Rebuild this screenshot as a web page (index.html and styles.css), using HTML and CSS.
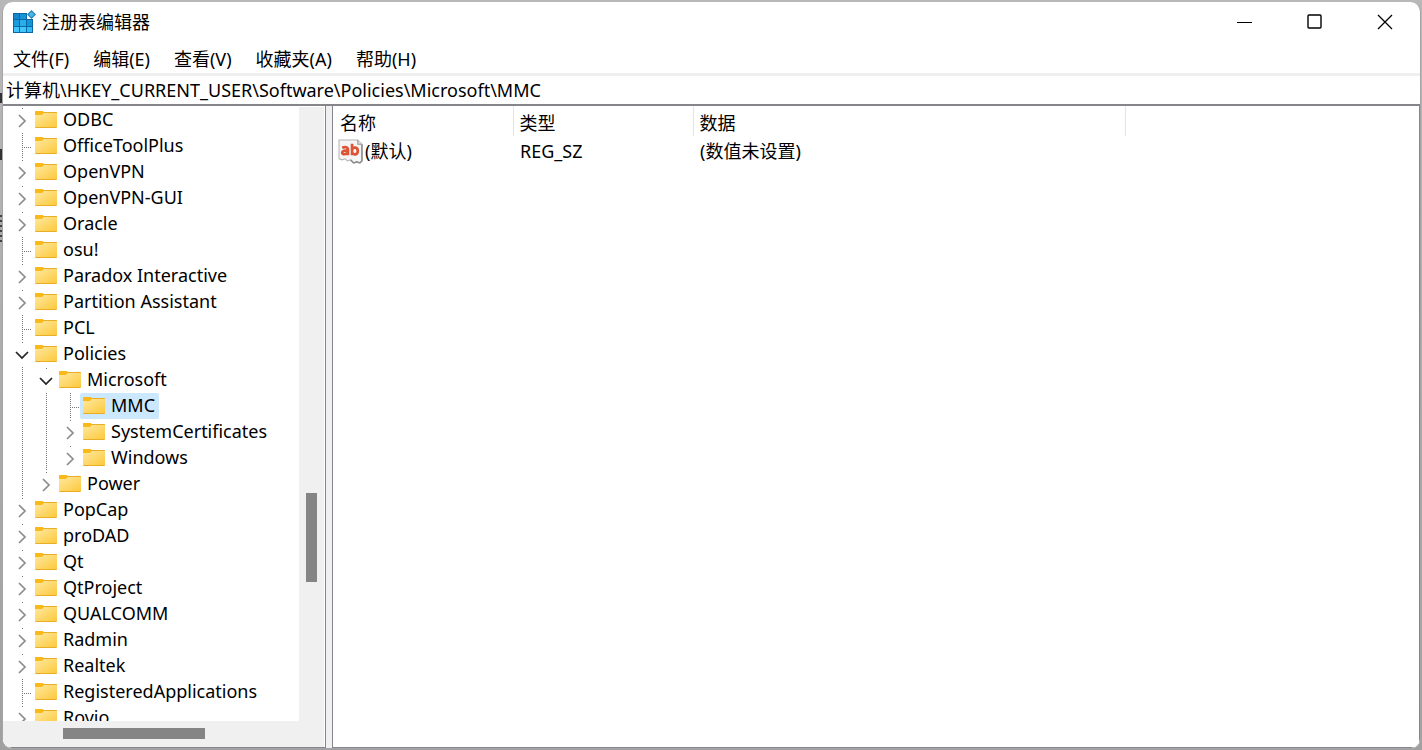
FILE: index.html
```
<!DOCTYPE html>
<html lang="zh-CN">
<head>
<meta charset="utf-8">
<title>注册表编辑器</title>
<link rel="stylesheet" href="styles.css">
</head>
<body>
<svg class="defs" aria-hidden="true">
  <defs>
    <linearGradient id="fg" x1="0" y1="0" x2="1" y2="1"><stop offset="0" stop-color="#ffe8a0"/><stop offset="1" stop-color="#fcc93c"/></linearGradient>
    <symbol id="folder" viewBox="0 0 22 18">
      <path d="M0 2a1 1 0 0 1 1-1h6l2 1h12.500a.5.5 0 0 1 .5.5V17a1 1 0 0 1-1 1H1a1 1 0 0 1-1-1z" fill="#e9ae25"/>
      <path d="M0 4h7l1.500-1H22v14H0z" fill="url(#fg)"/>
      <path d="M0 2a1 1 0 0 1 1-1h6l1.500 1.500L7 5H0z" fill="#fbb917"/>
    </symbol>
    <symbol id="right" viewBox="0 0 14 14"><path d="M4 1l6 6-6 6" fill="none" stroke="#8c8c8c" stroke-width="1.700"/></symbol>
    <symbol id="down" viewBox="0 0 14 14"><path d="M1 4l6 6 6-6" fill="none" stroke="#222" stroke-width="1.700"/></symbol>
  </defs>
</svg>
<main class="window">
  <header class="title">
    <svg class="app" viewBox="0 0 24 24" aria-hidden="true">
      <path d="M1 3h14v6h6v14H1z" fill="#0868a4"/>
      <path d="M2 4h5v5H2z" fill="#1687cb"/><path d="M8 4h6v5H8z" fill="#1594d7"/>
      <path d="M2 10h5v6H2z" fill="#1b9ce0"/><path d="M8 10h6v6H8z" fill="#29aeea"/><path d="M15 10h5v6h-5z" fill="#1495d6"/>
      <path d="M2 17h5v5H2z" fill="#40c6fb"/><path d="M8 17h6v5H8z" fill="#40c6fb"/><path d="M15 17h5v5h-5z" fill="#36baf2"/>
      <path d="M15 1h6v8h-6z" fill="#fff"/><path d="M19.500 0l4.500 4.500-4.500 4.500-4.500-4.500z" fill="#1c7fb8"/><path d="M19.500 1.500l3 3-3 3-3-3z" fill="#4bb2e4"/>
    </svg>
    <h1>注册表编辑器</h1>
    <div class="controls">
      <button aria-label="最小化"><svg viewBox="0 0 16 16"><path d="M0 8.500h15" stroke="#000" fill="none"/></svg></button>
      <button aria-label="最大化"><svg viewBox="0 0 16 16"><rect x="1" y="1" width="13" height="13" rx="1" stroke="#000" stroke-width="1.400" fill="none"/></svg></button>
      <button aria-label="关闭"><svg viewBox="0 0 16 16"><path d="M1 1l14 14M15 1L1 15" stroke="#000" stroke-width="1.300" fill="none"/></svg></button>
    </div>
  </header>
  <nav class="menu"><button>文件(F)</button><button>编辑(E)</button><button>查看(V)</button><button>收藏夹(A)</button><button>帮助(H)</button></nav>
  <input class="address" aria-label="地址" value="计算机\HKEY_CURRENT_USER\Software\Policies\Microsoft\MMC">
  <div class="panes">
    <section class="left">
      <div class="view">
        <ul class="tree" id="tree"></ul>
      </div>
      <div class="vbar"><div class="thumb"></div></div>
      <div class="hbar"><div class="thumb"></div></div>
    </section>
    <section class="right">
      <table>
        <thead><tr><th class="name">名称</th><th class="type">类型</th><th class="data">数据</th><th></th></tr></thead>
        <tbody><tr><td><span class="value"><svg class="ab" viewBox="0 0 24 24" aria-hidden="true">
          <path d="M1 1h18l4 4v16l-2 2-3-1-3 1-3-3-3 1-2-2-3 1-3-1z" fill="#f5f5f5" stroke="#b4b4b4"/>
          <path d="M19 1v4h4" fill="#ddd" stroke="#999"/><path d="M23 5v16l-2 2-3-1-3 1-3-3" fill="none" stroke="#8f8f8f" stroke-width="1.500"/>
          <g fill="none" stroke="#dc5433" stroke-width="2.600"><path d="M4 8.500c3-1.300 5.500-.8 5.500 1.500v5.500M9.500 11.200c-3-.3-5.500.1-5.500 2s4 2 5.500-.2"/><path d="M13.500 4.500v11M13.500 10c1-2.500 5.500-2.500 5.500 1.500s-4.500 4-5.500 1.500"/></g>
        </svg>(默认)</span></td><td>REG_SZ</td><td>(数值未设置)</td><td></td></tr></tbody>
      </table>
    </section>
  </div>
</main>
<script src="tree.js"></script>
</body>
</html>
```
FILE: styles.css
```
* { box-sizing: border-box; }
html, body { height: 100%; margin: 0; }
body {
  display: flex;
  padding: 2px 1px 1px 2px;
  background:
    linear-gradient(#333, #333) 0 93px / 2px 10px no-repeat,
    linear-gradient(#333, #333) 0 149px / 2px 11px no-repeat,
    repeating-linear-gradient(#444 0 2px, #aaa 2px 5px) 0 215px / 2px 27px no-repeat,
    linear-gradient(#b8b8b8, #a0a0a0);
  color: #000;
  font: 18px/26px "Noto Sans", "Noto Sans CJK SC", sans-serif;
}
button, input { font: inherit; color: inherit; border: 0; background: none; padding: 0; }
ul { list-style: none; margin: 0; padding: 0; }
.defs { position: absolute; width: 0; height: 0; }
.window { flex: 1; min-width: 0; display: flex; flex-direction: column; background: #fff; border-radius: 10px; overflow: hidden; border: 1px solid #a5a5a8; border-top: 0; }
.title { display: flex; align-items: center; height: 40px; padding-left: 9px; flex: none; }
.app { width: 24px; height: 24px; margin-right: 6px; }
h1 { margin: 0; font-size: 18px; font-weight: 400; }
.controls { display: flex; margin-left: auto; }
.controls button { width: 70px; height: 40px; display: flex; align-items: center; justify-content: center; }
.controls svg { width: 16px; height: 16px; }
.menu { display: flex; gap: 24px; height: 31px; padding: 2px 10px 0; align-items: center; flex: none; }
.menu button { white-space: nowrap; }
.address { width: 100%; height: 33px; padding: 0 3px 2px; border-top: 3px solid #efefef; border-bottom: 2px solid #85858a; flex: none; }
.panes { flex: 1; min-height: 0; display: flex; gap: 6px; background: #f0f0f0; }
.left { width: 323px; flex: none; display: grid; grid-template: minmax(0, 1fr) 26px / minmax(0, 1fr) 26px; padding-top: 1px; background: #fff; border-right: 1px solid #85858f; border-bottom: 1px solid #85858f; }
.view { overflow: hidden; }
.vbar { grid-row: 1 / 3; grid-column: 2; background: #f0f0f0; padding: 386px 7px 0 7px; border-right: 1px solid #fff; }
.vbar .thumb { height: 89px; background: #858585; }
.hbar { grid-row: 2; grid-column: 1; background: #f0f0f0; padding: 7px 0 0 60px; }
.hbar .thumb { width: 142px; height: 11px; background: #858585; }
.right { flex: 1; min-width: 0; background: #fff; border: 1px solid #85858f; border-top: 0; }
.tree { padding-left: 8px; }
.tree ul { padding-left: 24px; background: repeating-linear-gradient(#777 0 1px, transparent 1px 2px) 11px 0 / 1px 100% no-repeat; }
.row { display: flex; height: 26px; }
.toggle { width: 21px; height: 26px; display: flex; align-items: center; padding: 2px 0 0 4px; background: linear-gradient(#777, #777) 11px 1px / 1px 1px no-repeat; }
.toggle svg { width: 14px; height: 14px; }
.leaf { background: repeating-linear-gradient(#777 0 1px, transparent 1px 2px) 11px 0 / 1px 100% no-repeat, repeating-linear-gradient(90deg, #777 0 1px, transparent 1px 2px) 11px 14px / 12px 1px no-repeat; }
.label { display: flex; align-items: center; gap: 6px; padding: 0 4px 2px 3px; white-space: nowrap; border-radius: 2px; }
.label svg { width: 22px; height: 18px; }
.selected { background: #cce8ff; }
table { width: 100%; table-layout: fixed; border-collapse: collapse; }
th { height: 30px; padding: 3px 6px 0; font-weight: 400; text-align: left; border-right: 1px solid #e5e5e5; }
th:first-child { padding-left: 7px; }
th:last-child { border: 0; }
.name, .type { width: 180px; }
.data { width: 432px; }
td { height: 30px; padding: 0 7px; white-space: nowrap; }
td:first-child { padding-left: 5px; }
.value { display: flex; align-items: center; gap: 2px; }
.ab { width: 25px; height: 25px; }
```
FILE: tree.js
```
const keys = [
  ["ODBC", []], ["OfficeToolPlus"], ["OpenVPN", []], ["OpenVPN-GUI", []], ["Oracle", []], ["osu!"],
  ["Paradox Interactive", []], ["Partition Assistant", []], ["PCL"],
  ["Policies", [["Microsoft", [["MMC"], ["SystemCertificates", []], ["Windows", []]]], ["Power", []]]],
  ["PopCap", []], ["proDAD", []], ["Qt", []], ["QtProject", []], ["QUALCOMM", []], ["Radmin", []],
  ["Realtek", []], ["RegisteredApplications"], ["Rovio", []]
];
const icon = id => `<svg aria-hidden="true"><use href="#${id}"/></svg>`;
function render([name, children]) {
  const open = children && children.length > 0;
  const toggle = children
    ? `<button class="toggle" aria-label="${name}" aria-expanded="${open}">${icon(open ? "down" : "right")}</button>`
    : `<span class="toggle leaf"></span>`;
  return `<li><div class="row">${toggle}<button class="label${name === "MMC" ? " selected" : ""}">${icon("folder")}${name}</button></div>${open ? `<ul>${children.map(render).join("")}</ul>` : ""}</li>`;
}
document.getElementById("tree").innerHTML = keys.map(render).join("");
```
